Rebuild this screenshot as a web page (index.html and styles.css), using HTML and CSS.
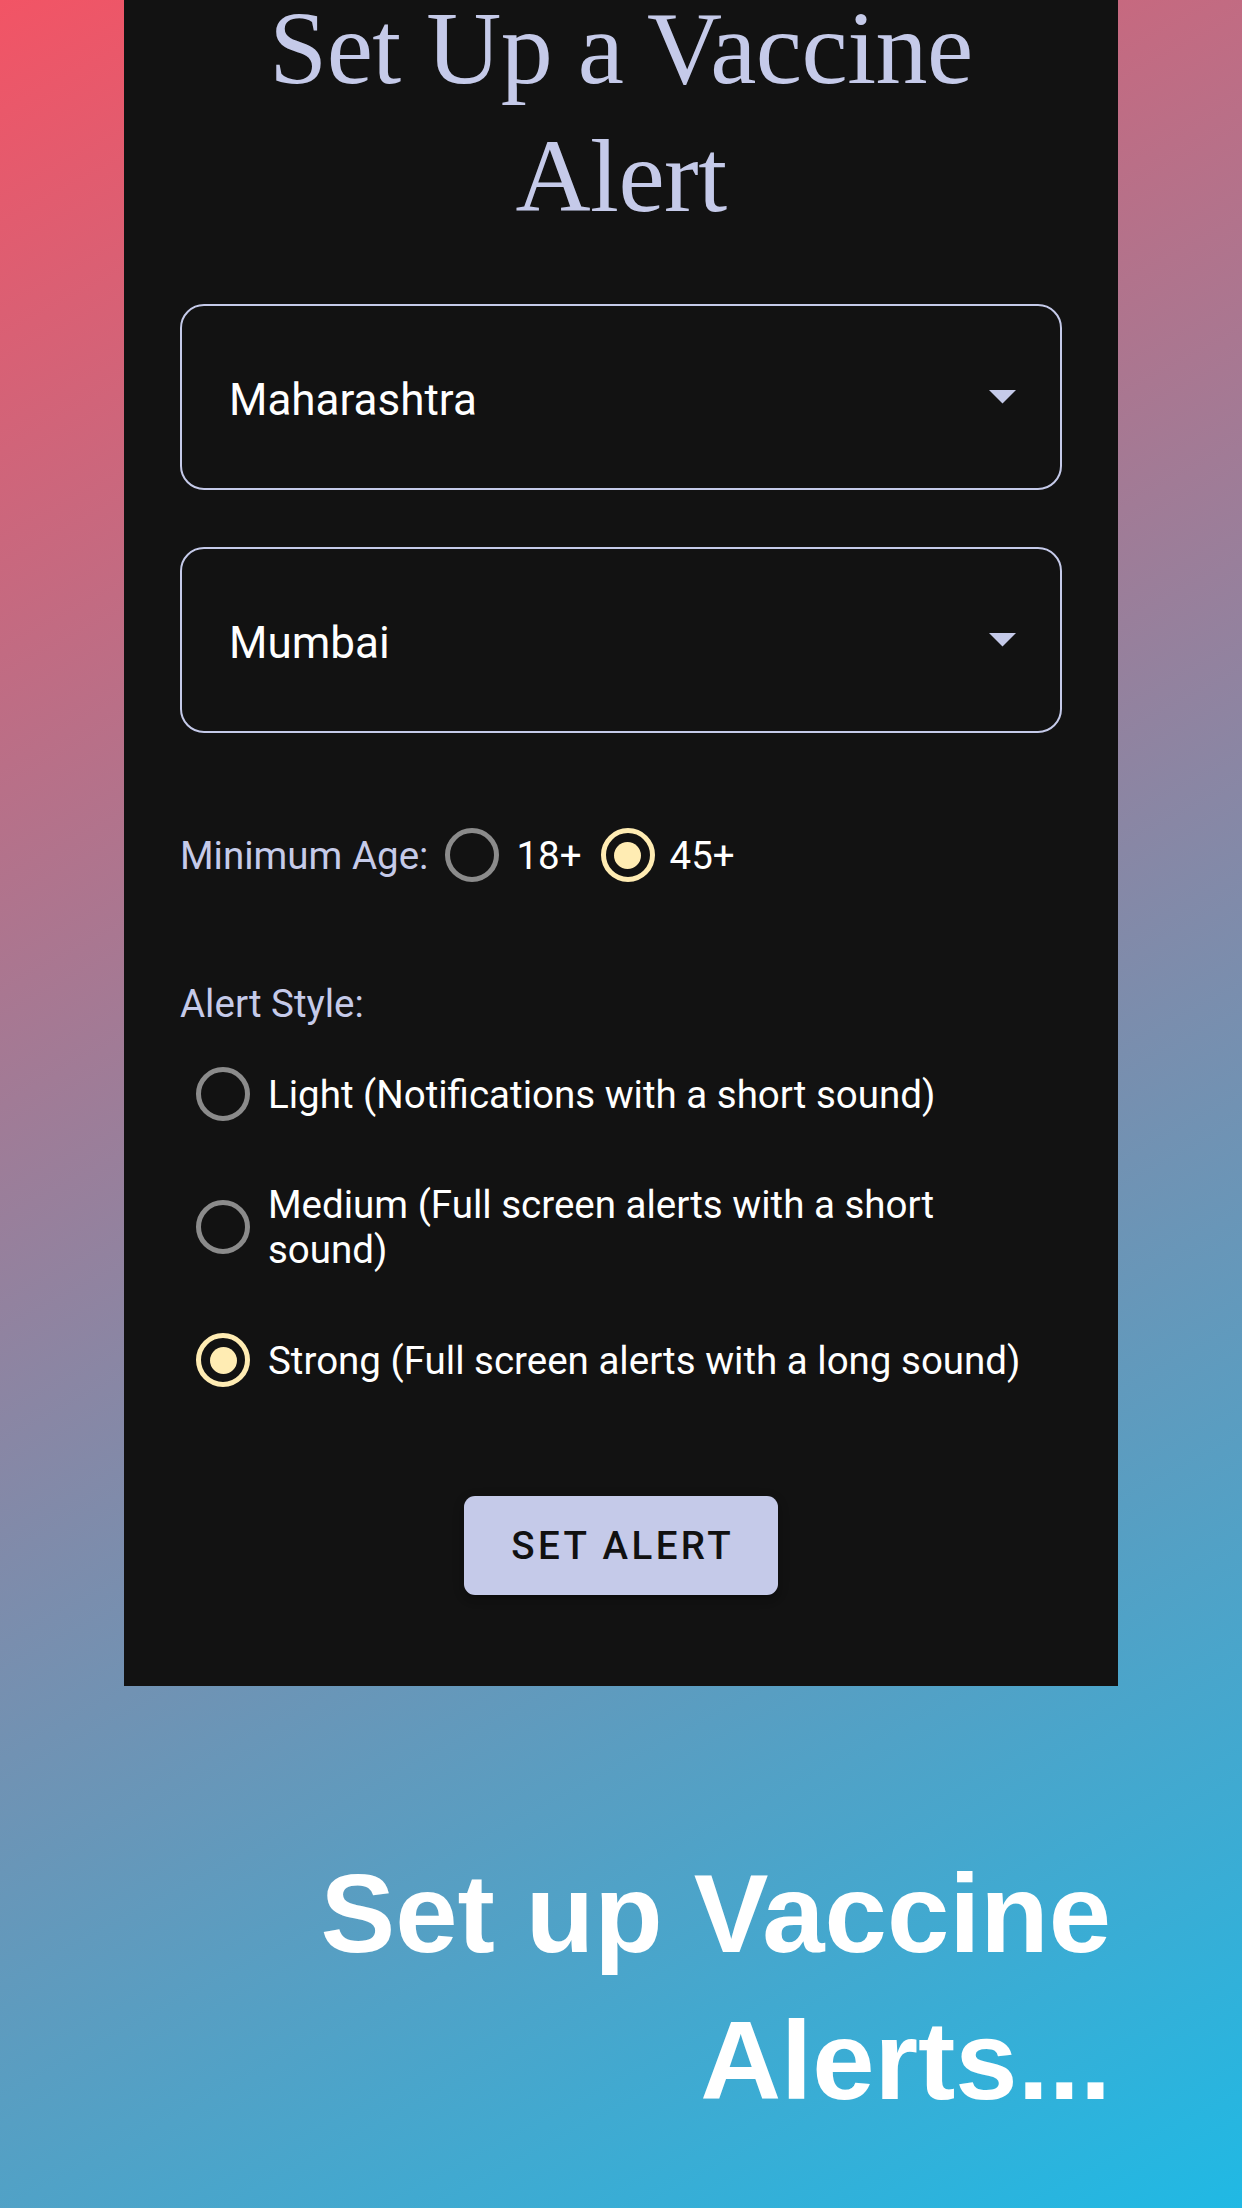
FILE: index.html
```html
<!DOCTYPE html>
<html lang="en">
<head>
<meta charset="utf-8">
<title>Set Up a Vaccine Alert</title>
<link rel="stylesheet" href="styles.css">
</head>
<body>
<div class="page">
  <main class="panel">
    <h1 class="title">Set Up a Vaccine<br>Alert</h1>

    <div class="fields">
      <div class="select">
        <span class="select-value">Maharashtra</span>
        <svg class="caret" width="27" height="14" viewBox="0 0 27 14"><path d="M0 0H27L13.5 13.5Z" fill="#c5cae9"/></svg>
      </div>
      <div class="select">
        <span class="select-value">Mumbai</span>
        <svg class="caret" width="27" height="14" viewBox="0 0 27 14"><path d="M0 0H27L13.5 13.5Z" fill="#c5cae9"/></svg>
      </div>
    </div>

    <div class="age-row">
      <span class="label label-age">Minimum Age:</span>
      <span class="radio radio-age"></span>
      <span class="age-text age-18">18+</span>
      <span class="radio radio-age radio-on radio-45"></span>
      <span class="age-text">45+</span>
    </div>

    <div class="label section-label">Alert Style:</div>
    <div class="options">
      <div class="option">
        <span class="radio"></span>
        <span class="option-text">Light (Notifications with a short sound)</span>
      </div>
      <div class="option">
        <span class="radio"></span>
        <span class="option-text">Medium (Full screen alerts with a short sound)</span>
      </div>
      <div class="option">
        <span class="radio radio-on"></span>
        <span class="option-text">Strong (Full screen alerts with a long sound)</span>
      </div>
    </div>

    <div class="btn-wrap">
      <button class="btn" type="button">SET ALERT</button>
    </div>
  </main>

  <h2 class="tagline">Set up Vaccine<br>Alerts...</h2>
</div>
</body>
</html>
```

FILE: styles.css
```css
html, body {
  margin: 0;
  padding: 0;
}

body {
  font-family: Roboto, "Noto Sans", sans-serif;
}

.page {
  width: 1242px;
  height: 2208px;
  overflow: hidden;
  background: linear-gradient(152deg, #f25465 0%, #20b9e4 100%);
}

.panel {
  width: 994px;
  box-sizing: border-box;
  margin: -40px auto 0;
  padding: 24px 56px 91px;
  background: #121212;
}

.title {
  margin: 0 0 64px;
  font-family: "Liberation Serif", "Times New Roman", serif;
  font-weight: 400;
  font-size: 104px;
  line-height: 128px;
  letter-spacing: -0.5px;
  text-align: center;
  color: #c5cae9;
}

.fields {
  display: flex;
  flex-direction: column;
  gap: 57px;
  margin-bottom: 95px;
}

.select {
  height: 186px;
  box-sizing: border-box;
  border: 2px solid #c5cae9;
  border-radius: 24px;
  display: flex;
  align-items: center;
  justify-content: space-between;
  padding: 0 44px 0 47px;
}

.select-value {
  font-size: 44px;
  line-height: 44px;
  padding-top: 6px;
  color: #ffffff;
}

.caret {
  display: block;
  flex: none;
}

.label {
  font-size: 38.5px;
  line-height: 45px;
  color: #c5cae9;
}

.age-row {
  display: flex;
  align-items: center;
  height: 54px;
  margin-bottom: 99px;
}

.label-age {
  margin-right: 17px;
}

.age-text {
  font-size: 38.5px;
  line-height: 45px;
  color: #ffffff;
}

.age-18 {
  margin-right: 19px;
}

.radio-age {
  margin-right: 17px;
}

.radio-45 {
  margin-right: 15px;
}

.radio {
  width: 54px;
  height: 54px;
  box-sizing: border-box;
  border: 5.5px solid #8b8b8b;
  border-radius: 50%;
  flex: none;
  display: flex;
  align-items: center;
  justify-content: center;
}

.radio-on {
  border-color: #ffecb3;
}

.radio-on::after {
  content: "";
  width: 27px;
  height: 27px;
  border-radius: 50%;
  background: #ffecb3;
}

.section-label {
  margin-bottom: 23px;
}

.options {
  display: flex;
  flex-direction: column;
  gap: 43px;
}

.option {
  display: flex;
  align-items: center;
  min-height: 90px;
  padding-left: 16px;
}

.option-text {
  margin-left: 18px;
  max-width: 775px;
  font-size: 38.5px;
  line-height: 45px;
  color: #ffffff;
}

.btn-wrap {
  display: flex;
  justify-content: center;
  margin-top: 91px;
}

.btn {
  width: 314px;
  height: 99px;
  padding: 0 0 0 3.4px;
  border: none;
  border-radius: 11px;
  background: #c5cae9;
  color: #111111;
  font-family: Roboto, "Noto Sans", sans-serif;
  font-weight: 500;
  font-size: 38.5px;
  letter-spacing: 3.4px;
  box-shadow: 0 6px 3px -5px rgba(0, 0, 0, 0.2), 0 5px 5px 0 rgba(0, 0, 0, 0.14), 0 3px 13px 0 rgba(0, 0, 0, 0.12);
}

.tagline {
  width: 994px;
  box-sizing: border-box;
  margin: 154px auto 0;
  padding-right: 7px;
  text-align: right;
  font-family: "Liberation Sans", Arial, sans-serif;
  font-weight: 700;
  font-size: 112px;
  line-height: 147px;
  color: #ffffff;
}
```
